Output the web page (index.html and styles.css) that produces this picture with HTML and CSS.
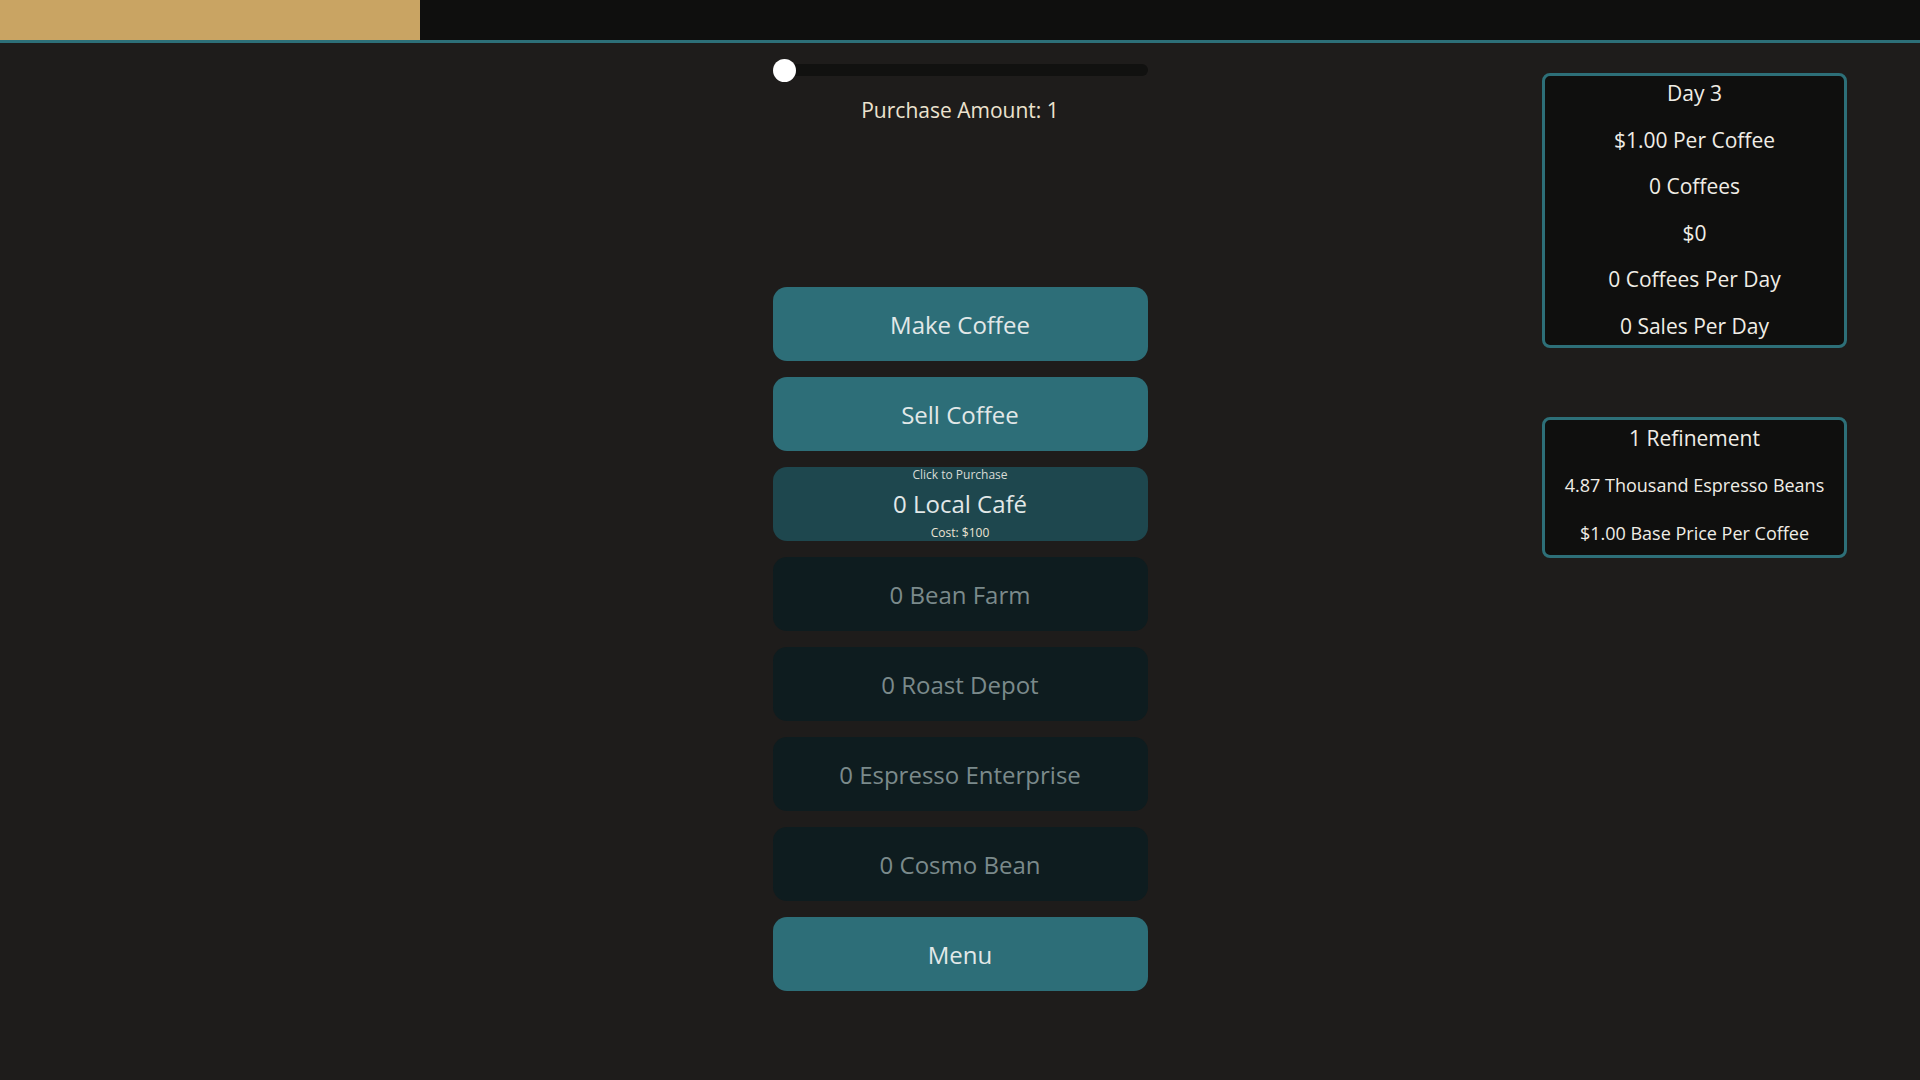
FILE: index.html
```html
<!DOCTYPE html>
<html lang="en">
<head>
<meta charset="utf-8">
<title>Coffee</title>
<link rel="stylesheet" href="styles.css">
</head>
<body>
<header class="topbar">
  <div class="progress"></div>
</header>
<main class="layout">
  <div class="side-left"></div>
  <section class="center">
    <input class="amount-slider" type="range" min="1" max="100" value="1">
    <div class="amount-label">Purchase Amount: 1</div>
    <div class="actions">
      <button class="btn">Make Coffee</button>
      <button class="btn">Sell Coffee</button>
      <button class="btn btn-buy">
        <span class="buy-hint">Click to Purchase</span>
        <span class="buy-name">0 Local Café</span>
        <span class="buy-cost">Cost: $100</span>
      </button>
      <button class="btn btn-locked">0 Bean Farm</button>
      <button class="btn btn-locked">0 Roast Depot</button>
      <button class="btn btn-locked">0 Espresso Enterprise</button>
      <button class="btn btn-locked">0 Cosmo Bean</button>
      <button class="btn">Menu</button>
    </div>
  </section>
  <aside class="side-right">
    <div class="panel stats">
      <div class="line">Day 3</div>
      <div class="line">$1.00 Per Coffee</div>
      <div class="line">0 Coffees</div>
      <div class="line">$0</div>
      <div class="line">0 Coffees Per Day</div>
      <div class="line">0 Sales Per Day</div>
    </div>
    <div class="panel refine">
      <div class="line">1 Refinement</div>
      <div class="line small">4.87 Thousand Espresso Beans</div>
      <div class="line small">$1.00 Base Price Per Coffee</div>
    </div>
  </aside>
</main>
</body>
</html>
```
FILE: styles.css
```css
* { box-sizing: border-box; }

html, body {
  margin: 0;
  padding: 0;
  height: 100%;
}

body {
  background: #1e1c1b;
  color: #ece4d4;
  font-family: "Open Sans", "Noto Sans", sans-serif;
  overflow: hidden;
}

.topbar {
  height: 43px;
  background: #0f0f0e;
  border-bottom: 3px solid #2d6f78;
  display: flex;
}

.progress {
  width: 420px;
  height: 40px;
  background: #c9a463;
}

.layout {
  display: grid;
  grid-template-columns: 1fr 375px 1fr;
}

.center {
  display: flex;
  flex-direction: column;
  align-items: stretch;
  padding-top: 16px;
}

.amount-slider {
  -webkit-appearance: none;
  appearance: none;
  width: 375px;
  height: 22px;
  margin: 0;
  background: transparent;
}

.amount-slider::-webkit-slider-runnable-track {
  height: 12px;
  border-radius: 6px;
  background: #111110;
}

.amount-slider::-webkit-slider-thumb {
  -webkit-appearance: none;
  appearance: none;
  width: 23px;
  height: 23px;
  margin-top: -5.5px;
  border-radius: 50%;
  background: #ffffff;
  border: none;
}

.amount-label {
  margin-top: 15px;
  text-align: center;
  font-size: 21px;
  line-height: 28px;
  color: #ece2cf;
}

.actions {
  margin-top: 163px;
  display: flex;
  flex-direction: column;
  gap: 16px;
}

.btn {
  height: 74px;
  width: 100%;
  border: none;
  border-radius: 14px;
  background: #2d6e78;
  color: #e2e8e8;
  font-family: "Open Sans", "Noto Sans", sans-serif;
  font-size: 24px;
  padding: 0;
  display: flex;
  flex-direction: column;
  align-items: center;
  justify-content: center;
  cursor: pointer;
}

.btn-buy {
  background: #1e474e;
  justify-content: flex-start;
}

.buy-hint {
  font-size: 12px;
  line-height: 16px;
  color: #d8dcd6;
}

.buy-name {
  font-size: 24px;
  line-height: 42px;
}

.buy-cost {
  font-size: 12px;
  line-height: 16px;
  color: #ece4d4;
}

.btn-locked {
  background: #0e1c1f;
  color: #7b8a8b;
}

.side-right {
  display: flex;
  flex-direction: column;
  align-items: flex-end;
  padding-top: 30px;
  padding-right: 73px;
  gap: 69px;
}

.panel {
  width: 305px;
  background: #0f0f0e;
  border: 3px solid #2d6f78;
  border-radius: 8px;
  display: flex;
  flex-direction: column;
  align-items: center;
  gap: 12.5px;
  color: #f0ede6;
}

.line {
  font-size: 21px;
  line-height: 34px;
  white-space: nowrap;
}

.line.small {
  font-size: 18px;
}

.stats {
  padding: 0 0 2px;
}

.refine {
  gap: 13.5px;
  padding: 1px 0 5px;
}
```
